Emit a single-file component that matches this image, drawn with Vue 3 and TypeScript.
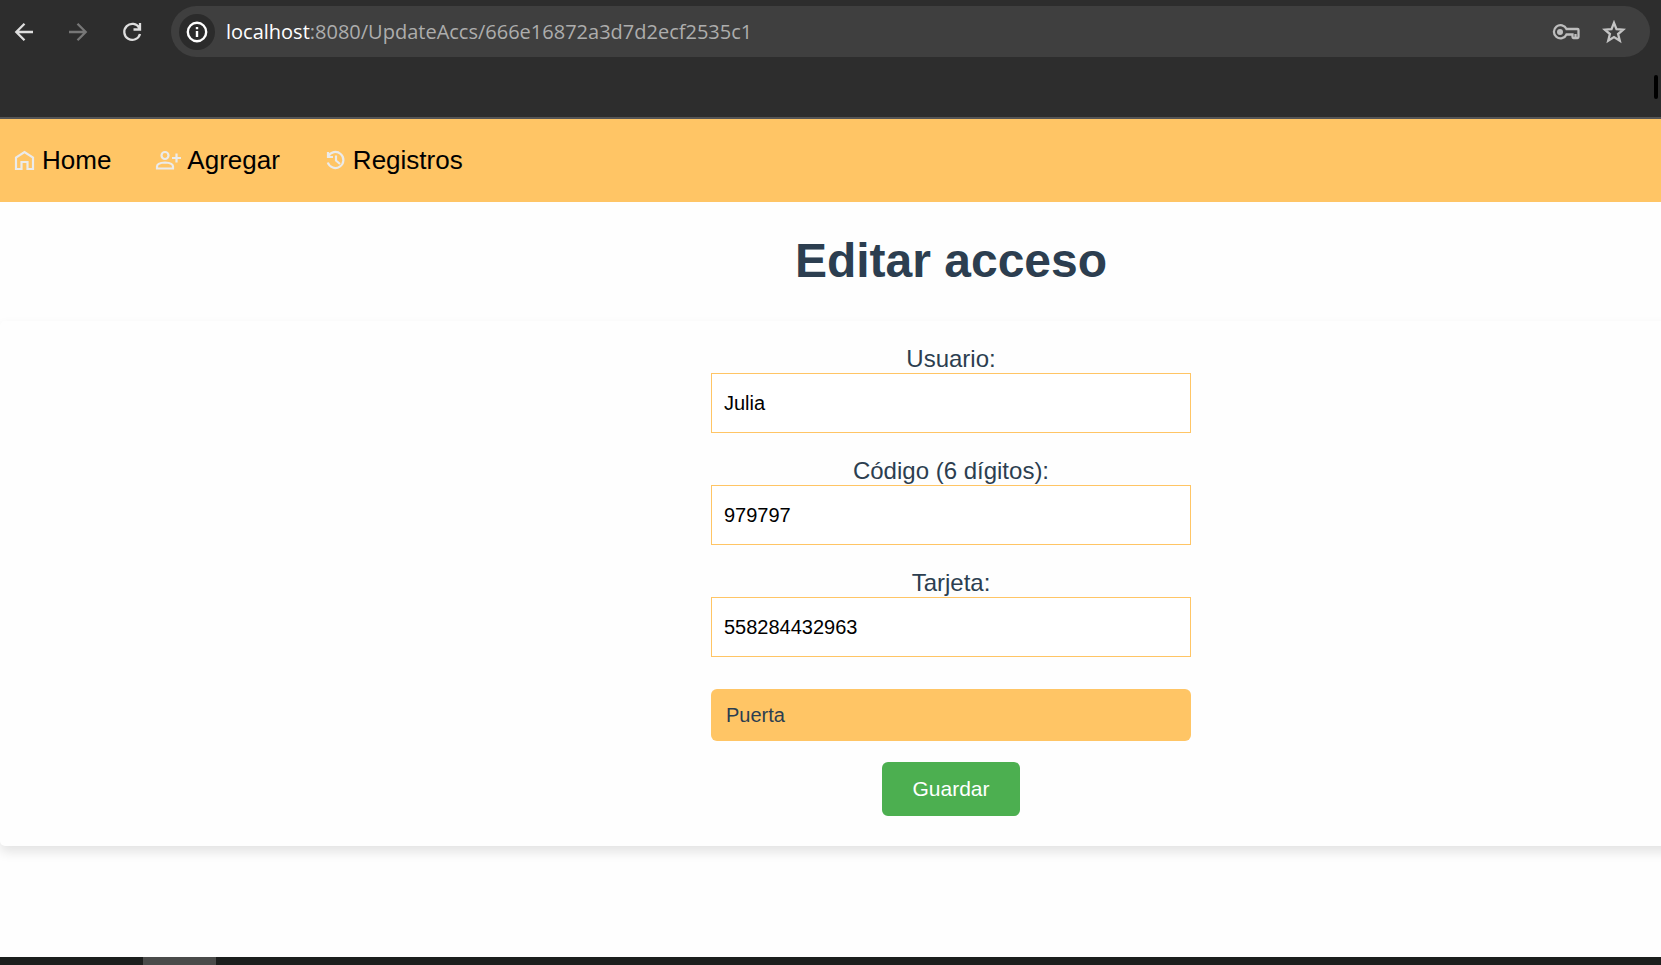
<script setup lang="ts">
import { reactive } from 'vue'

interface Field {
  key: 'user' | 'code' | 'card'
  label: string
}

const fields: Field[] = [
  { key: 'user', label: 'Usuario:' },
  { key: 'code', label: 'Código (6 dígitos):' },
  { key: 'card', label: 'Tarjeta:' },
]

const form = reactive({
  user: 'Julia',
  code: '979797',
  card: '558284432963',
  door: '',
})
</script>

<template>
  <div class="screen">
    <header class="browser">
      <div class="toolbar">
        <button class="tool" type="button" aria-label="Atrás">
          <svg viewBox="0 0 24 24"><path d="M21 12H4.5M12.5 3.8 4.300 12l8.200 8.200" /></svg>
        </button>
        <button class="tool dim" type="button" aria-label="Adelante">
          <svg viewBox="0 0 24 24"><path d="M3 12h16.500M11.500 3.800l8.200 8.200-8.200 8.200" /></svg>
        </button>
        <button class="tool" type="button" aria-label="Recargar">
          <svg viewBox="0 0 24 24"><path d="M19.300 8A8 8 0 1 0 20 14M20 3v6.500h-6.500" /></svg>
        </button>
        <div class="address">
          <button class="info" type="button" aria-label="Información del sitio">
            <svg viewBox="0 0 22 22">
              <circle cx="11" cy="11" r="9.200" />
              <path d="M11 10v6M11 6v2.200" />
            </svg>
          </button>
          <div class="url"><span class="host">localhost</span>:8080/UpdateAccs/666e16872a3d7d2ecf2535c1</div>
          <button class="tool key" type="button" aria-label="Contraseñas">
            <svg viewBox="0 0 28 18">
              <path d="M14.500 6H25.500q1 0 1 1v7q0 1-1 1h-4q-1 0-1-1v-2.500h-6A6.600 6.600 0 1 1 14.500 6ZM23.500 11v4" />
              <circle class="solid" cx="8" cy="9" r="3" />
            </svg>
          </button>
          <button class="tool star" type="button" aria-label="Marcador">
            <svg viewBox="0 0 24 24">
              <path d="M12 2.800l2.500 6.300 6.800.500-5.200 4.400 1.700 6.700L12 17.100l-5.800 3.600 1.700-6.700-5.200-4.400 6.800-.500Z" />
            </svg>
          </button>
        </div>
      </div>
      <div class="bookmarks"><span class="mark"></span></div>
    </header>

    <div class="viewport">
      <div class="page">
        <nav class="nav">
          <a href="#home">
            <svg viewBox="0 0 24 24"><path d="M4 21V9.500L12.500 4 21 9.500V21h-5.500v-7h-6v7Z" /></svg>
            <span>Home</span>
          </a>
          <a href="#agregar">
            <svg class="wide" viewBox="0 0 27 24">
              <circle cx="11" cy="7.500" r="3.500" />
              <path d="M3 20.500v-2q0-3.500 8-4 8 .500 8 4v2ZM22.500 5.500v9M18 10h9" />
            </svg>
            <span>Agregar</span>
          </a>
          <a href="#registros">
            <svg viewBox="0 0 24 24"><path d="M5.200 8.500A8 8 0 1 1 4.800 14.500M5 4v5h5M13 7.500v5l4 3.500" /></svg>
            <span>Registros</span>
          </a>
        </nav>

        <h1>Editar acceso</h1>

        <form class="card" @submit.prevent>
          <div v-for="field in fields" :key="field.key" class="field">
            <label :for="field.key">{{ field.label }}</label>
            <input :id="field.key" v-model="form[field.key]" type="text" />
          </div>
          <select v-model="form.door" aria-label="Puerta">
            <option value="">Puerta</option>
          </select>
          <button class="save" type="submit">Guardar</button>
        </form>
      </div>
    </div>

    <footer class="taskbar"><span class="task"></span></footer>
  </div>
</template>

<style>
body {
  margin: 0;
}
</style>

<style scoped>
.screen {
  display: flex;
  flex-direction: column;
  min-height: 100vh;
  overflow: hidden;
  background: #fefefe;
  color: #2c3e50;
  font-family: "Liberation Sans", Arial, sans-serif;
}

button {
  padding: 0;
  border: 0;
  background: none;
  font-family: inherit;
}

svg {
  display: block;
  width: 100%;
  height: 100%;
  fill: none;
  stroke: currentColor;
  stroke-width: 2;
}

.browser {
  background: #2d2d2d;
  border-bottom: 2px solid #555;
}

.toolbar {
  display: flex;
  align-items: center;
  gap: 30px;
  padding: 6px 11px 0 12px;
}

.tool {
  flex: none;
  width: 24px;
  height: 24px;
  color: #dedede;
}

.tool svg {
  stroke-width: 2.300;
}

.dim {
  color: #777;
}

.address {
  display: flex;
  flex: 1;
  align-items: center;
  height: 51px;
  margin-left: -3px;
  padding: 0 24px 0 8px;
  border-radius: 26px;
  background: #3f3f3f;
}

.info {
  flex: none;
  width: 36px;
  height: 36px;
  padding: 7px;
  border-radius: 50%;
  background: #2b2b2b;
  color: #fff;
}

.info svg {
  stroke-width: 2.400;
}

.url {
  flex: 1;
  margin-left: 11px;
  color: #adadad;
  font-family: "Open Sans", "Noto Sans", sans-serif;
  font-size: 20px;
  line-height: 28px;
  white-space: nowrap;
}

.host {
  color: #fff;
}

.key {
  width: 28px;
  height: 18px;
  color: #bdbdbd;
}

.solid {
  fill: currentColor;
  stroke: none;
}

.star {
  margin-left: 22px;
  color: #c4c4c4;
}

.bookmarks {
  display: flex;
  align-items: flex-start;
  justify-content: flex-end;
  height: 42px;
  padding: 18px 3px 0 0;
}

.mark {
  width: 4px;
  height: 24px;
  border-radius: 2px;
  background: #000;
}

.viewport {
  flex: 1;
  overflow: hidden;
}

/* The page is wider than the window and runs off its right edge. */
.page {
  width: calc(100% + 241px);
  padding-bottom: 48px;
}

.nav {
  display: flex;
  align-items: center;
  gap: 43px;
  box-sizing: border-box;
  height: 83px;
  padding: 0 0 2px 12px;
  background: #ffc565;
}

.nav a {
  display: flex;
  align-items: center;
  gap: 6px;
  color: #000;
  font-size: 26px;
  line-height: 30px;
  text-decoration: none;
}

.nav svg {
  width: 24px;
  height: 24px;
  color: #ebebeb;
  stroke-width: 2.200;
}

.nav .wide {
  width: 27px;
}

h1 {
  margin: 0;
  padding: 31px 0 33px;
  font-size: 48px;
  line-height: 55px;
  text-align: center;
}

.card {
  display: flex;
  flex-direction: column;
  align-items: center;
  padding: 24px 0 30px;
  border-radius: 5px;
  background: #fefefe;
  box-shadow: 0 6px 12px rgba(0, 0, 0, 0.11);
}

.field {
  display: flex;
  flex-direction: column;
  width: 480px;
  margin-bottom: 24px;
  text-align: center;
}

label {
  font-size: 24px;
  line-height: 28px;
}

input {
  box-sizing: border-box;
  width: 100%;
  height: 60px;
  padding: 0 12px;
  border: 1px solid #ffc565;
  border-radius: 0;
  background: #fff;
  color: #000;
  font-family: inherit;
  font-size: 20px;
}

select {
  width: 480px;
  height: 52px;
  margin-top: 8px;
  padding: 0 15px;
  border: 0;
  border-radius: 6px;
  appearance: none;
  background: #ffc565;
  color: #2c3e50;
  font-family: inherit;
  font-size: 20px;
}

.save {
  height: 54px;
  margin-top: 21px;
  padding: 0 30px;
  border-radius: 6px;
  background: #4caf50;
  color: #fff;
  font-size: 21px;
}

.taskbar {
  display: flex;
  height: 8px;
  padding-left: 143px;
  background: #1c1e1d;
}

.task {
  width: 73px;
  background: #4a4b4a;
}
</style>
